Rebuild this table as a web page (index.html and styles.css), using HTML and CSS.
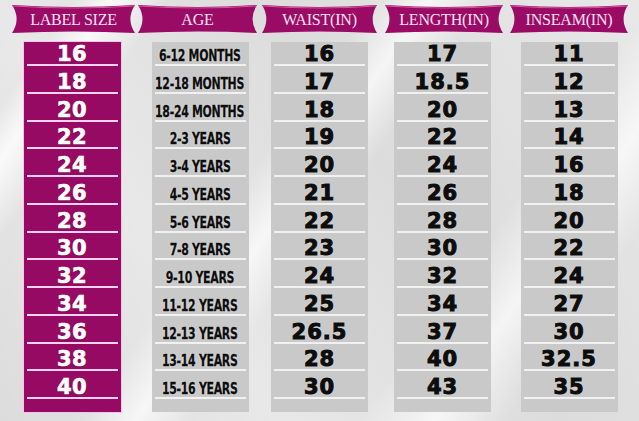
FILE: index.html
```html
<!DOCTYPE html>
<html>
<head>
<meta charset="utf-8">
<link rel="stylesheet" href="styles.css">
</head>
<body>
<div class="chart">
  <div class="col c1">
    <div class="banner"><svg class="ribbon" viewBox="0 0 120 28" preserveAspectRatio="none"><path d="M0,0 Q60,4 120,0 Q111,14 120,28 Q60,25 0,28 Q9,14 0,0 Z" fill="#990b64"/><path d="M1,1 Q60,5 119,1" stroke="#d9569f" stroke-width="1.2" fill="none"/></svg><span>LABEL SIZE</span></div>
    <div class="box purple">
      <div class="row">16</div><div class="row">18</div><div class="row">20</div><div class="row">22</div><div class="row">24</div><div class="row">26</div><div class="row">28</div><div class="row">30</div><div class="row">32</div><div class="row">34</div><div class="row">36</div><div class="row">38</div><div class="row">40</div>
    </div>
  </div>
  <div class="col c2">
    <div class="banner"><svg class="ribbon" viewBox="0 0 120 28" preserveAspectRatio="none"><path d="M0,0 Q60,4 120,0 Q111,14 120,28 Q60,25 0,28 Q9,14 0,0 Z" fill="#990b64"/><path d="M1,1 Q60,5 119,1" stroke="#d9569f" stroke-width="1.2" fill="none"/></svg><span>AGE</span></div>
    <div class="box gray age">
      <div class="row"><b>6-12 MONTHS</b></div><div class="row"><b>12-18 MONTHS</b></div><div class="row"><b>18-24 MONTHS</b></div><div class="row"><b>2-3 YEARS</b></div><div class="row"><b>3-4 YEARS</b></div><div class="row"><b>4-5 YEARS</b></div><div class="row"><b>5-6 YEARS</b></div><div class="row"><b>7-8 YEARS</b></div><div class="row"><b>9-10 YEARS</b></div><div class="row"><b>11-12 YEARS</b></div><div class="row"><b>12-13 YEARS</b></div><div class="row"><b>13-14 YEARS</b></div><div class="row"><b>15-16 YEARS</b></div>
    </div>
  </div>
  <div class="col c3">
    <div class="banner"><svg class="ribbon" viewBox="0 0 120 28" preserveAspectRatio="none"><path d="M0,0 Q60,4 120,0 Q111,14 120,28 Q60,25 0,28 Q9,14 0,0 Z" fill="#990b64"/><path d="M1,1 Q60,5 119,1" stroke="#d9569f" stroke-width="1.2" fill="none"/></svg><span>WAIST(IN)</span></div>
    <div class="box gray num">
      <div class="row">16</div><div class="row">17</div><div class="row">18</div><div class="row">19</div><div class="row">20</div><div class="row">21</div><div class="row">22</div><div class="row">23</div><div class="row">24</div><div class="row">25</div><div class="row">26.5</div><div class="row">28</div><div class="row">30</div>
    </div>
  </div>
  <div class="col c4">
    <div class="banner"><svg class="ribbon" viewBox="0 0 120 28" preserveAspectRatio="none"><path d="M0,0 Q60,4 120,0 Q111,14 120,28 Q60,25 0,28 Q9,14 0,0 Z" fill="#990b64"/><path d="M1,1 Q60,5 119,1" stroke="#d9569f" stroke-width="1.2" fill="none"/></svg><span>LENGTH(IN)</span></div>
    <div class="box gray num">
      <div class="row">17</div><div class="row">18.5</div><div class="row">20</div><div class="row">22</div><div class="row">24</div><div class="row">26</div><div class="row">28</div><div class="row">30</div><div class="row">32</div><div class="row">34</div><div class="row">37</div><div class="row">40</div><div class="row">43</div>
    </div>
  </div>
  <div class="col c5">
    <div class="banner"><svg class="ribbon" viewBox="0 0 120 28" preserveAspectRatio="none"><path d="M0,0 Q60,4 120,0 Q111,14 120,28 Q60,25 0,28 Q9,14 0,0 Z" fill="#990b64"/><path d="M1,1 Q60,5 119,1" stroke="#d9569f" stroke-width="1.2" fill="none"/></svg><span>INSEAM(IN)</span></div>
    <div class="box gray num">
      <div class="row">11</div><div class="row">12</div><div class="row">13</div><div class="row">14</div><div class="row">16</div><div class="row">18</div><div class="row">20</div><div class="row">22</div><div class="row">24</div><div class="row">27</div><div class="row">30</div><div class="row">32.5</div><div class="row">35</div>
    </div>
  </div>
</div>
</body>
</html>
```

FILE: styles.css
```css
html, body {
  margin: 0;
  padding: 0;
}
body {
  width: 639px;
  height: 421px;
  overflow: hidden;
  background:
    linear-gradient(125deg, rgba(255,255,255,0) 0%, rgba(255,255,255,0) 8%, rgba(255,255,255,0.8) 12%, rgba(255,255,255,0) 18%, rgba(255,255,255,0) 40%, rgba(255,255,255,0.7) 46%, rgba(255,255,255,0) 52%, rgba(255,255,255,0) 70%, rgba(255,255,255,0.7) 78%, rgba(255,255,255,0) 86%),
    linear-gradient(55deg, rgba(0,0,0,0.05) 0%, rgba(0,0,0,0) 30%, rgba(0,0,0,0.05) 60%, rgba(0,0,0,0) 100%),
    #e8e8e8;
  font-family: "DejaVu Sans", sans-serif;
}
.chart {
  display: flex;
  padding: 5px 0 0 12px;
}
.col {
  display: flex;
  flex-direction: column;
  align-items: center;
}
.c1 { width: 123px; margin-right: 3px; }
.c2 { width: 119px; margin-right: 5px; }
.c3 { width: 115px; margin-right: 8px; }
.c4 { width: 118px; margin-right: 7px; }
.c5 { width: 118px; }
.c1 .box { margin-right: 3px; }
.c2 .box { margin-left: 5px; }
.c4 .box { margin-right: 3px; }

.banner {
  position: relative;
  width: 100%;
  height: 28px;
  display: flex;
  align-items: center;
  justify-content: center;
}
.ribbon {
  position: absolute;
  left: 0;
  top: 0;
  width: 100%;
  height: 100%;
}
.banner span {
  position: relative;
  font-family: "Liberation Serif", serif;
  font-size: 16px;
  color: #fbe3f4;
  letter-spacing: -0.2px;
  padding-top: 1px;
}
.box {
  margin-top: 9px;
  width: 97px;
  height: 370px;
  box-sizing: border-box;
  padding: 0 3px 12px;
  display: flex;
  flex-direction: column;
}
.purple {
  background: #970a63;
  outline: 1px solid #f3c6e6;
}
.gray {
  background: #c9c9c9;
}
.row {
  height: 27.75px;
  box-sizing: border-box;
  flex: none;
  display: flex;
  align-items: flex-end;
  justify-content: center;
  line-height: 17px;
  padding-bottom: 1px;
  font-size: 21px;
  font-weight: bold;
}
.row:first-child {
  height: 24px;
}
.purple .row {
  border-bottom: 2.5px solid #f7d2ee;
  color: #ffffff;
  -webkit-text-stroke: 0.7px #ffffff;
  letter-spacing: 0.5px;
  text-shadow: 0 1px 1px rgba(60,0,40,0.6);
}
.gray .row {
  border-bottom: 2.5px solid #f1f1f1;
}
.num .row {
  color: #0d0d0d;
  -webkit-text-stroke: 1.1px #0d0d0d;
  letter-spacing: 1px;
  text-shadow: 0 0 2px #ffffff, 0 0 1px #ffffff;
}
.age .row b {
  display: inline-block;
  font-family: "DejaVu Sans Condensed", "DejaVu Sans", sans-serif;
  font-stretch: condensed;
  font-size: 16px;
  line-height: 15px;
  color: #0d0d0d;
  transform: scaleX(0.76);
  white-space: nowrap;
  letter-spacing: -0.4px;
  -webkit-text-stroke: 0.3px #0d0d0d;
  text-shadow: 0 0 2px #ffffff;
}
```
